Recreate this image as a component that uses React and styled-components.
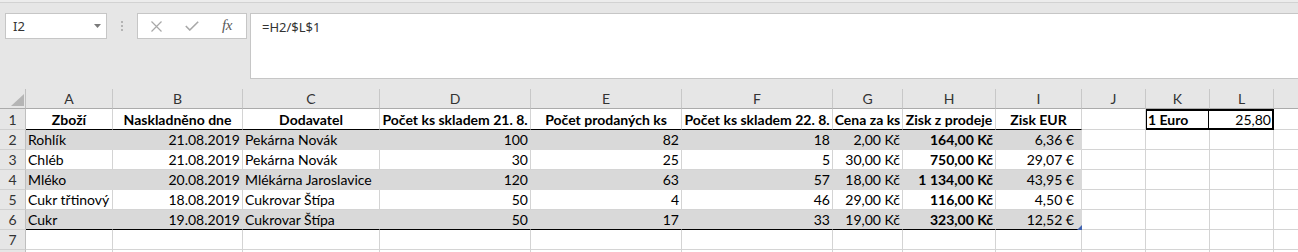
import React from 'react';
import styled, { createGlobalStyle } from 'styled-components';

const GlobalStyle = createGlobalStyle`
  html, body { margin: 0; padding: 0; }
  body {
    background: #e6e6e6;
    width: 1298px;
    height: 252px;
    overflow: hidden;
    font-family: "Lato", "Liberation Sans", sans-serif;
  }
  * { box-sizing: border-box; }
`;

const Window = styled.div`
  width: 1298px;
  height: 252px;
  overflow: hidden;
  display: flex;
  flex-direction: column;
  background: #e6e6e6;
`;

const TopEdge = styled.div`
  flex: none;
  height: 3px;
  background: #ececec;
  border-bottom: 1px solid #d2d2d2;
`;

const FormulaBar = styled.div`
  flex: none;
  height: 86px;
  display: flex;
  align-items: flex-start;
  padding: 10px 0 0 5px;
`;

const NameBox = styled.div`
  width: 102px;
  height: 26px;
  background: #fff;
  border: 1px solid #c6c6c6;
  display: flex;
  align-items: center;
  justify-content: space-between;
  padding: 0 5px 0 7px;
  font-family: "Noto Sans", "Open Sans", sans-serif;
  font-size: 13px;
  line-height: 18px;
  color: #333;
`;

const Grip = styled.div`
  width: 2px;
  margin: 8px 14px 0 14px;
  display: flex;
  flex-direction: column;
  gap: 2px;
`;

const GripDot = styled.span`
  width: 2px;
  height: 2px;
  background: #b4b4b4;
`;

const FxBox = styled.div`
  width: 110px;
  height: 26px;
  background: #fff;
  border: 1px solid #c6c6c6;
  display: flex;
  align-items: center;
`;

const IconSlot = styled.span`
  display: flex;
  margin-left: ${p => p.$gap}px;
`;

const FxLabel = styled.span`
  margin-left: 23px;
  font-family: "Liberation Serif", "DejaVu Serif", serif;
  font-style: italic;
  font-size: 15px;
  color: #595959;
  letter-spacing: -0.5px;
  line-height: 18px;
  margin-top: -2px;
`;

const FormulaInput = styled.div`
  flex: 1;
  height: 66px;
  margin-left: 3px;
  margin-right: -2px;
  background: #fff;
  border: 1px solid #c6c6c6;
  padding: 4px 11px;
  font-family: "Noto Sans", "Open Sans", sans-serif;
  font-size: 13px;
  line-height: 18px;
  color: #333;
`;

const SheetClip = styled.div`
  flex: none;
  width: 1298px;
  overflow: hidden;
`;

const Sheet = styled.div`
  display: grid;
  grid-template-columns: 26px 87px 130px 137px 151px 151px 151px 70px 93px 86px 64px 64px 64px 64px;
  grid-template-rows: 20px 21px repeat(7, 20px);
  width: max-content;
  font-family: "Lato", "Liberation Sans", sans-serif;
  font-size: 14px;
  color: #000;
`;

const Corner = styled.div`
  background: #e6e6e6;
  border-right: 1px solid #bfbfbf;
  border-bottom: 1px solid #ababab;
  display: flex;
  align-items: flex-end;
  justify-content: flex-end;
  padding: 0 1px 2px 0;
`;

const ColHead = styled.div`
  background: #e6e6e6;
  border-right: 1px solid #c8c8c8;
  border-bottom: 1px solid #ababab;
  display: flex;
  align-items: center;
  justify-content: center;
  line-height: 17px;
  color: #333;
`;

const RowHead = styled.div`
  background: #e6e6e6;
  border-right: 1px solid #bfbfbf;
  border-bottom: 1px solid #d0d0d0;
  display: flex;
  align-items: center;
  justify-content: center;
  line-height: 17px;
  color: #333;
`;

const justify = a => (a === 'right' ? 'flex-end' : a === 'center' ? 'center' : 'flex-start');

const Cell = styled.div`
  position: relative;
  display: flex;
  align-items: center;
  justify-content: ${p => justify(p.$align)};
  padding: 0 ${p => p.$pr}px 0 ${p => p.$pl}px;
  background: ${p => (p.$band ? '#d9d9d9' : '#fff')};
  border-right: 1px solid ${p => (p.$band ? 'transparent' : '#d4d4d4')};
  border-bottom: 1px solid ${p => (p.$rule ? '#000' : p.$band ? 'transparent' : '#d4d4d4')};
  font-weight: ${p => (p.$bold ? 700 : 400)};
  white-space: nowrap;
  overflow: ${p => (p.$handle ? 'visible' : 'hidden')};
  line-height: 17px;
`;

const RateBox = styled.div`
  grid-column: span 2;
  margin-left: -1px;
  display: flex;
  background: #fff;
  border: 2px solid #000;
  line-height: 16px;
`;

const RateLabel = styled.div`
  width: 62px;
  border-right: 1px solid #000;
  display: flex;
  align-items: center;
  padding-left: 1px;
  font-weight: 700;
`;

const RateValue = styled.div`
  flex: 1;
  display: flex;
  align-items: center;
  justify-content: flex-end;
  padding-right: 1px;
`;

const ResizeHandle = styled.svg`
  position: absolute;
  right: -1px;
  bottom: -1px;
`;

// Column M lies past the right edge; its letter is not visible in the view.
const letters = ['A', 'B', 'C', 'D', 'E', 'F', 'G', 'H', 'I', 'J', 'K', 'L', ''];

const tableCols = [
  { align: 'left', pl: 2, pr: 2 },
  { align: 'right', pl: 2, pr: 2 },
  { align: 'left', pl: 2, pr: 2 },
  { align: 'right', pl: 2, pr: 2 },
  { align: 'right', pl: 2, pr: 2 },
  { align: 'right', pl: 2, pr: 2 },
  { align: 'right', pl: 2, pr: 2 },
  { align: 'right', pl: 2, pr: 2, bold: true },
  { align: 'right', pl: 2, pr: 7 },
];

const headers = [
  'Zboží',
  'Naskladněno dne',
  'Dodavatel',
  'Počet ks skladem 21. 8.',
  'Počet prodaných ks',
  'Počet ks skladem 22. 8.',
  'Cena za ks',
  'Zisk z prodeje',
  'Zisk EUR',
];

const rows = [
  ['Rohlík', '21.08.2019', 'Pekárna Novák', '100', '82', '18', '2,00 Kč', '164,00 Kč', '6,36 €'],
  ['Chléb', '21.08.2019', 'Pekárna Novák', '30', '25', '5', '30,00 Kč', '750,00 Kč', '29,07 €'],
  ['Mléko', '20.08.2019', 'Mlékárna Jaroslavice', '120', '63', '57', '18,00 Kč', '1 134,00 Kč', '43,95 €'],
  ['Cukr třtinový', '18.08.2019', 'Cukrovar Štípa', '50', '4', '46', '29,00 Kč', '116,00 Kč', '4,50 €'],
  ['Cukr', '19.08.2019', 'Cukrovar Štípa', '50', '17', '33', '19,00 Kč', '323,00 Kč', '12,52 €'],
];

const Blank = ({ rule }) => <Cell $pl={2} $pr={2} $rule={rule} />;

export default function App() {
  return (
    <Window>
      <GlobalStyle />
      <TopEdge />
      <FormulaBar>
        <NameBox>
          <span>I2</span>
          <svg width="7" height="4" viewBox="0 0 7 4">
            <polygon points="0,0 7,0 3.5,4" fill="#7a7a7a" />
          </svg>
        </NameBox>
        <Grip>
          <GripDot />
          <GripDot />
          <GripDot />
        </Grip>
        <FxBox>
          <IconSlot $gap={13}>
            <svg width="11" height="11" viewBox="0 0 11 11">
              <path d="M0.5 0.5 L10.5 10.5 M10.5 0.5 L0.5 10.5" stroke="#a8a8a8" strokeWidth="1.2" fill="none" />
            </svg>
          </IconSlot>
          <IconSlot $gap={23}>
            <svg width="14" height="10" viewBox="0 0 14 10">
              <polyline points="0.8,5 4.8,9 13.2,0.8" stroke="#a8a8a8" strokeWidth="1.6" fill="none" />
            </svg>
          </IconSlot>
          <FxLabel>fx</FxLabel>
        </FxBox>
        <FormulaInput>=H2/$L$1</FormulaInput>
      </FormulaBar>
      <SheetClip>
        <Sheet>
          <Corner>
            <svg width="13" height="12" viewBox="0 0 13 12">
              <polygon points="13,0 13,12 0,12" fill="#b5b5b5" />
            </svg>
          </Corner>
          {letters.map((l, i) => (
            <ColHead key={i}>{l}</ColHead>
          ))}

          <RowHead>1</RowHead>
          {headers.map(h => (
            <Cell key={h} $align="center" $pl={0} $pr={0} $bold $rule>
              {h}
            </Cell>
          ))}
          <Blank />
          <RateBox>
            <RateLabel>1 Euro</RateLabel>
            <RateValue>25,80</RateValue>
          </RateBox>
          <Blank />

          {rows.map((r, ri) => {
            const band = ri % 2 === 0;
            const last = ri === rows.length - 1;
            return (
              <React.Fragment key={ri}>
                <RowHead>{ri + 2}</RowHead>
                {r.map((v, ci) => {
                  const c = tableCols[ci];
                  const isHandle = last && ci === 8;
                  return (
                    <Cell
                      key={ci}
                      $align={c.align}
                      $pl={c.pl}
                      $pr={c.pr}
                      $bold={c.bold}
                      $band={band}
                      $rule={last}
                      $handle={isHandle}
                    >
                      {v}
                      {isHandle && (
                        <ResizeHandle width="5" height="5" viewBox="0 0 5 5">
                          <polygon points="5,0 5,5 0,5" fill="#3f62b0" />
                        </ResizeHandle>
                      )}
                    </Cell>
                  );
                })}
                <Blank />
                <Blank />
                <Blank />
                <Blank />
              </React.Fragment>
            );
          })}

          {['7', ''].map((n, ri) => (
            <React.Fragment key={ri}>
              <RowHead>{n}</RowHead>
              {letters.map((l, i) => (
                <Blank key={i} />
              ))}
            </React.Fragment>
          ))}
        </Sheet>
      </SheetClip>
    </Window>
  );
}
